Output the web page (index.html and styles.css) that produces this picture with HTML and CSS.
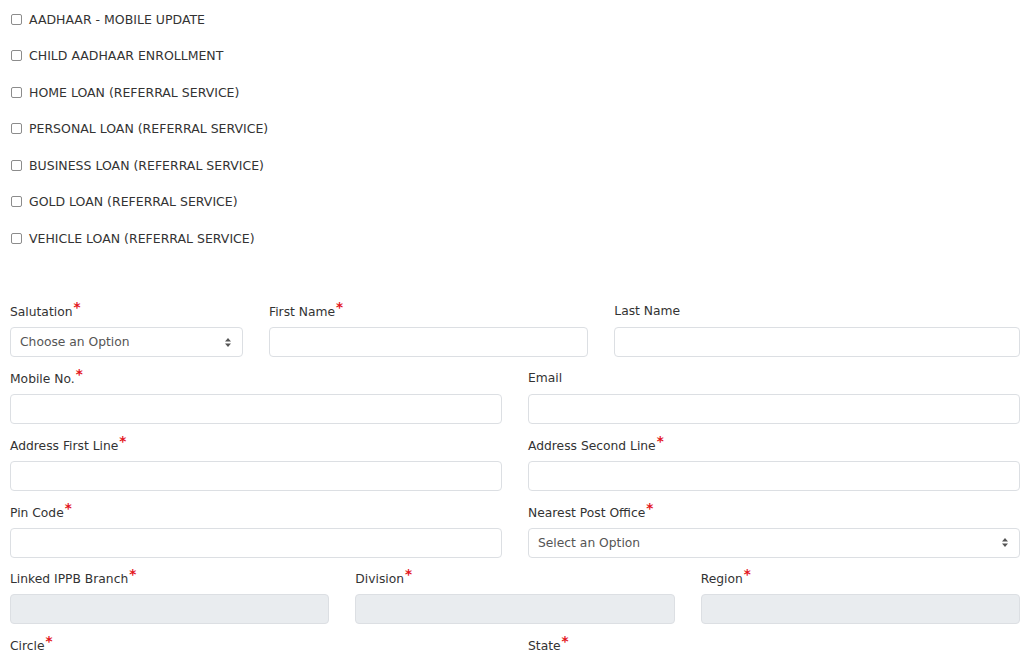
FILE: index.html
```html
<!DOCTYPE html>
<html>
<head>
<meta charset="utf-8">
<link rel="stylesheet" href="styles.css">
</head>
<body>
<div class="page">
  <div class="services">
    <label class="svc"><input type="checkbox" class="cb"><span>AADHAAR - MOBILE UPDATE</span></label>
    <label class="svc"><input type="checkbox" class="cb"><span>CHILD AADHAAR ENROLLMENT</span></label>
    <label class="svc"><input type="checkbox" class="cb"><span>HOME LOAN (REFERRAL SERVICE)</span></label>
    <label class="svc"><input type="checkbox" class="cb"><span>PERSONAL LOAN (REFERRAL SERVICE)</span></label>
    <label class="svc"><input type="checkbox" class="cb"><span>BUSINESS LOAN (REFERRAL SERVICE)</span></label>
    <label class="svc"><input type="checkbox" class="cb"><span>GOLD LOAN (REFERRAL SERVICE)</span></label>
    <label class="svc"><input type="checkbox" class="cb"><span>VEHICLE LOAN (REFERRAL SERVICE)</span></label>
  </div>

  <div class="form">
    <div class="group s3">
      <div class="lbl">Salutation<span class="req">*</span></div>
      <div class="ctrl select"><span>Choose an Option</span><svg class="arrows" width="8" height="11" viewBox="0 0 8 11"><path d="M4 1 L7 4.5 H1 Z M4 10 L7 6.5 H1 Z" fill="#555"/></svg></div>
    </div>
    <div class="group s4">
      <div class="lbl">First Name<span class="req">*</span></div>
      <div class="ctrl"></div>
    </div>
    <div class="group s5 nostar">
      <div class="lbl">Last Name</div>
      <div class="ctrl"></div>
    </div>

    <div class="group s6">
      <div class="lbl">Mobile No.<span class="req">*</span></div>
      <div class="ctrl"></div>
    </div>
    <div class="group s6 nostar">
      <div class="lbl">Email</div>
      <div class="ctrl"></div>
    </div>

    <div class="group s6">
      <div class="lbl">Address First Line<span class="req">*</span></div>
      <div class="ctrl"></div>
    </div>
    <div class="group s6">
      <div class="lbl">Address Second Line<span class="req">*</span></div>
      <div class="ctrl"></div>
    </div>

    <div class="group s6">
      <div class="lbl">Pin Code<span class="req">*</span></div>
      <div class="ctrl"></div>
    </div>
    <div class="group s6">
      <div class="lbl">Nearest Post Office<span class="req">*</span></div>
      <div class="ctrl select"><span>Select an Option</span><svg class="arrows" width="8" height="11" viewBox="0 0 8 11"><path d="M4 1 L7 4.5 H1 Z M4 10 L7 6.5 H1 Z" fill="#555"/></svg></div>
    </div>

    <div class="group s4">
      <div class="lbl">Linked IPPB Branch<span class="req">*</span></div>
      <div class="ctrl disabled"></div>
    </div>
    <div class="group s4">
      <div class="lbl">Division<span class="req">*</span></div>
      <div class="ctrl disabled"></div>
    </div>
    <div class="group s4">
      <div class="lbl">Region<span class="req">*</span></div>
      <div class="ctrl disabled"></div>
    </div>

    <div class="group s6">
      <div class="lbl">Circle<span class="req">*</span></div>
      <div class="ctrl disabled"></div>
    </div>
    <div class="group s6">
      <div class="lbl">State<span class="req">*</span></div>
      <div class="ctrl disabled"></div>
    </div>
  </div>
</div>
</body>
</html>
```

FILE: styles.css
```css
html, body {
  margin: 0;
  padding: 0;
  background: #fff;
}
body {
  font-family: "DejaVu Sans", Verdana, sans-serif;
  font-size: 12.3px;
  color: #333;
}
.page {
  width: 1010px;
  padding: 0 4px 0 10px;
  overflow: hidden;
  height: 660px;
}
.services {
  display: flex;
  flex-direction: column;
  padding-top: 9.4px;
}
.svc {
  display: flex;
  align-items: center;
  height: 20px;
  margin-bottom: 16.5px;
  font-size: 12.5px;
  color: #333;
}
.cb {
  appearance: none;
  -webkit-appearance: none;
  width: 11px;
  height: 11px;
  margin: 0 7px 0 1px;
  border: 1px solid #8c8c8c;
  border-radius: 2px;
  background: #fff;
  box-sizing: border-box;
  flex: none;
}
.form {
  display: grid;
  grid-template-columns: repeat(12, 1fr);
  column-gap: 26px;
  margin-top: 37.6px;
}
.s3 { grid-column: span 3; }
.s4 { grid-column: span 4; }
.s5 { grid-column: span 5; }
.s6 { grid-column: span 6; }
.group {
  display: flex;
  flex-direction: column;
  margin-bottom: 11.7px;
}
.lbl {
  height: 20px;
  line-height: 20px;
  margin-bottom: 5px;
  color: #333;
  white-space: nowrap;
}
.nostar .lbl {
  margin-top: -1px;
  margin-bottom: 6px;
}
.req {
  color: #e3141b;
  font-weight: bold;
  font-size: 13.5px;
  position: relative;
  top: -4px;
  margin-left: 1px;
  line-height: 0;
}
.ctrl {
  height: 30px;
  box-sizing: border-box;
  border: 1px solid #dcdfe3;
  border-radius: 4px;
  background: #fff;
}
.ctrl.disabled {
  background: #e9ecef;
}
.select {
  display: flex;
  align-items: center;
  justify-content: space-between;
  padding: 0 10px 0 9px;
  color: #555;
}
.arrows {
  display: block;
}
```
